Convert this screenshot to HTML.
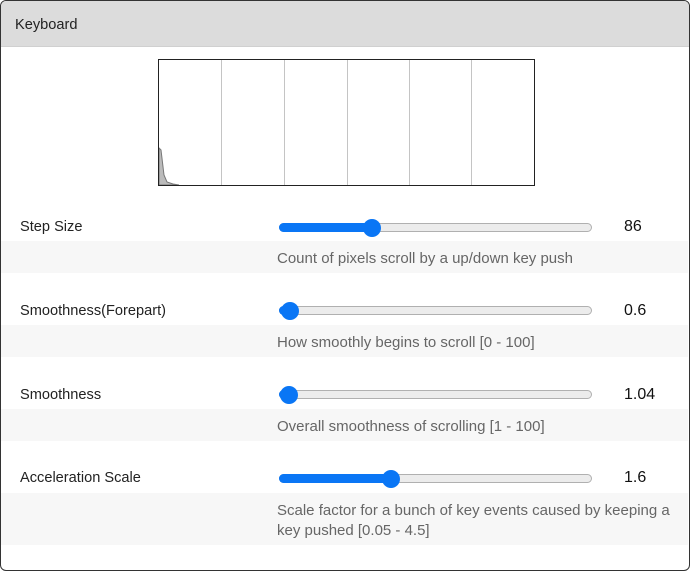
<!DOCTYPE html>
<html><head><style>
body{margin:0;width:690px;height:571px;background:#fff;font-family:"Segoe UI","Liberation Sans",sans-serif;overflow:hidden}
.frame{position:absolute;left:0;top:0;width:688px;height:569px;border:1px solid #333;border-radius:6px;overflow:hidden}
.hdr{position:absolute;left:0;top:0;width:688px;height:45px;background:#dcdcdc;border-bottom:1px solid #d0d0d0}
.hdr span{position:absolute;left:14px;top:16px;font-size:14.6px;color:#222}
.chart{position:absolute;left:157px;top:58px;width:375px;height:125px;border:1px solid #222}
.vl{position:absolute;top:0;width:1px;height:125px;background:#c4c4c4}
.lbl{position:absolute;left:20px;font-size:14.6px;color:#222}
.track{position:absolute;left:279px;width:311px;height:7px;border:1px solid #b0b0b0;border-radius:5px;background:#ececec}
.fill{position:absolute;left:279px;height:9px;border-radius:5px;background:#0a76f5}
.thumb{position:absolute;width:18px;height:18px;border-radius:50%;background:#0a76f5}
.val{position:absolute;left:624px;font-size:16px;color:#111;font-family:"Liberation Sans",sans-serif}
.band{position:absolute;left:1px;width:687px;background:#f7f7f7}
.desc{position:absolute;left:277px;font-size:15px;color:#666;line-height:20px;width:400px}
</style></head><body>
<div class="frame">
<div class="hdr"><span>Keyboard</span></div>
<div class="chart">
<div class="vl" style="left:62px"></div><div class="vl" style="left:125px"></div><div class="vl" style="left:188px"></div><div class="vl" style="left:250px"></div><div class="vl" style="left:312px"></div>
<svg width="30" height="40" style="position:absolute;left:0;bottom:0" viewBox="0 0 30 40"><path d="M0 40 L0 3 L2 5 L5 30 L8 37 L14 39 L20 40 Z" fill="#bbb" stroke="#777" stroke-width="1"/></svg>
</div>
</div>
<div class="lbl" style="top:219px">Step Size</div>
<div class="track" style="top:223px"></div><div class="fill" style="top:223px;width:93px"></div><div class="thumb" style="left:363px;top:219px"></div>
<div class="val" style="top:218px">86</div>
<div class="band" style="top:241px;height:32px"></div><div class="desc" style="top:249px">Count of pixels scroll by a up/down key push</div>

<div class="lbl" style="top:303px">Smoothness(Forepart)</div>
<div class="track" style="top:306px"></div><div class="fill" style="top:306px;width:12px"></div><div class="thumb" style="left:281px;top:302px"></div>
<div class="val" style="top:302px">0.6</div>
<div class="band" style="top:325px;height:32px"></div><div class="desc" style="top:333px">How smoothly begins to scroll [0 - 100]</div>

<div class="lbl" style="top:387px">Smoothness</div>
<div class="track" style="top:390px"></div><div class="fill" style="top:390px;width:12px"></div><div class="thumb" style="left:280px;top:386px"></div>
<div class="val" style="top:386px">1.04</div>
<div class="band" style="top:409px;height:32px"></div><div class="desc" style="top:417px">Overall smoothness of scrolling [1 - 100]</div>

<div class="lbl" style="top:470px">Acceleration Scale</div>
<div class="track" style="top:474px"></div><div class="fill" style="top:474px;width:112px"></div><div class="thumb" style="left:382px;top:470px"></div>
<div class="val" style="top:469px">1.6</div>
<div class="band" style="top:493px;height:52px"></div><div class="desc" style="top:501px">Scale factor for a bunch of key events caused by keeping a key pushed [0.05 - 4.5]</div>
</body></html>
